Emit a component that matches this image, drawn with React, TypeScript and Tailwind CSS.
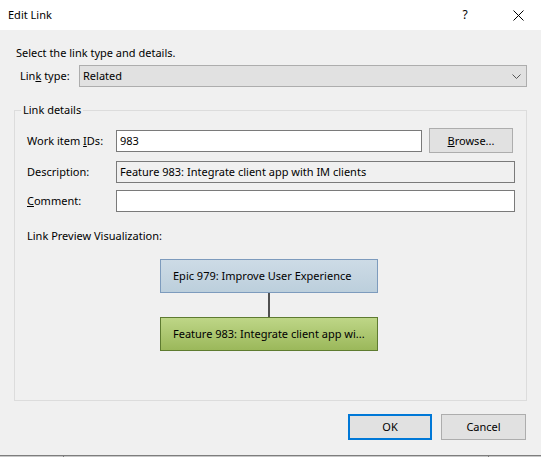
export default function App() {
  return (
    <div className="w-[541px] h-[457px] flex flex-col font-['Noto_Sans',sans-serif] text-[11px] leading-4 text-black select-none">
      {/* Title bar */}
      <div className="h-[30px] bg-white flex items-center">
        <span className="pl-2">Edit Link</span>
        <div className="ml-auto flex h-full">
          <div className="w-[46px] pr-[14px] flex items-center justify-center text-[12px]">?</div>
          <div className="w-[46px] flex items-center justify-center">
            <svg width="11" height="11" viewBox="0 0 11 11">
              <path d="M0.5 0.5 L10.5 10.5 M10.5 0.5 L0.5 10.5" stroke="#000" strokeWidth="1" fill="none" />
            </svg>
          </div>
        </div>
      </div>

      {/* Body */}
      <div className="h-[425px] bg-[#f0f0f0] flex flex-col">
        <div className="pt-[15px] pl-4">Select the link type and details.</div>

        <div className="mt-[4px] pl-[20px] pr-[14px] flex items-center">
          <span className="w-[59px]">
            Lin<u>k</u> type:
          </span>
          <div className="flex-1 h-[22px] border border-[#adadad] bg-[#e1e1e1] flex items-center pl-[3px] pr-[5px]">
            <span>Related</span>
            <svg className="ml-auto" width="9" height="5" viewBox="0 0 9 5">
              <path d="M0.5 0.5 L4.5 4.5 L8.5 0.5" stroke="#555" strokeWidth="1" fill="none" />
            </svg>
          </div>
        </div>

        <fieldset className="mt-[15px] mx-[14px] h-[299px] border border-[#dcdcdc]">
          <legend className="ml-[6px] px-[2px]">Link details</legend>

          <div className="pl-[12px]">
            <div className="mt-[10px] flex items-center">
              <span className="w-[89px]">
                Work item <u>I</u>Ds:
              </span>
              <div className="w-[306px] h-[22px] border border-[#7a7a7a] bg-white flex items-center pl-[3px]">983</div>
              <button className="ml-[7px] w-[84px] h-[25px] border border-[#adadad] bg-[#e1e1e1] flex items-center justify-center">
                <span>
                  <u>B</u>rowse...
                </span>
              </button>
            </div>

            <div className="mt-[8px] flex items-center">
              <span className="w-[89px]">Description:</span>
              <div className="w-[399px] h-[22px] border border-[#7a7a7a] bg-[#f0f0f0] flex items-center pl-[3px]">
                Feature 983: Integrate client app with IM clients
              </div>
            </div>

            <div className="mt-[7px] flex items-center">
              <span className="w-[89px]">
                <u>C</u>omment:
              </span>
              <div className="w-[399px] h-[22px] border border-[#7a7a7a] bg-white" />
            </div>

            <div className="mt-[16px]">Link Preview Visualization:</div>

            <div className="mt-[15px] flex flex-col items-center pr-[15px]">
              <div className="w-[218px] h-[34px] border border-[#7d9bbd] bg-linear-to-b from-[#cddbe6] to-[#bccfdc] flex items-center pl-[12px] whitespace-nowrap">
                Epic 979: Improve User Experience
              </div>
              <div className="w-[2px] h-[24px] bg-[#505050]" />
              <div className="w-[218px] h-[34px] border border-[#5e7b30] bg-linear-to-b from-[#bed687] to-[#9bb85a] flex items-center pl-[12px] whitespace-nowrap">
                Feature 983: Integrate client app wi...
              </div>
            </div>
          </div>
        </fieldset>

        <div className="mt-[13px] pr-[15px] flex justify-end">
          <button className="w-[84px] h-[26px] border-2 border-[#0078d7] bg-[#e1e1e1] flex items-center justify-center">OK</button>
          <button className="ml-[9px] w-[85px] h-[26px] border border-[#adadad] bg-[#e1e1e1] flex items-center justify-center">
            Cancel
          </button>
        </div>
      </div>

      {/* Bottom edge */}
      <div className="h-[1px] bg-[#7d7d7d]" />
      <div className="h-[1px] bg-[#c8c8c8] flex">
        <div className="ml-[63px] w-[1px] bg-[#7d7d7d]" />
        <div className="ml-[424px] w-[1px] bg-[#7d7d7d]" />
      </div>
    </div>
  );
}
